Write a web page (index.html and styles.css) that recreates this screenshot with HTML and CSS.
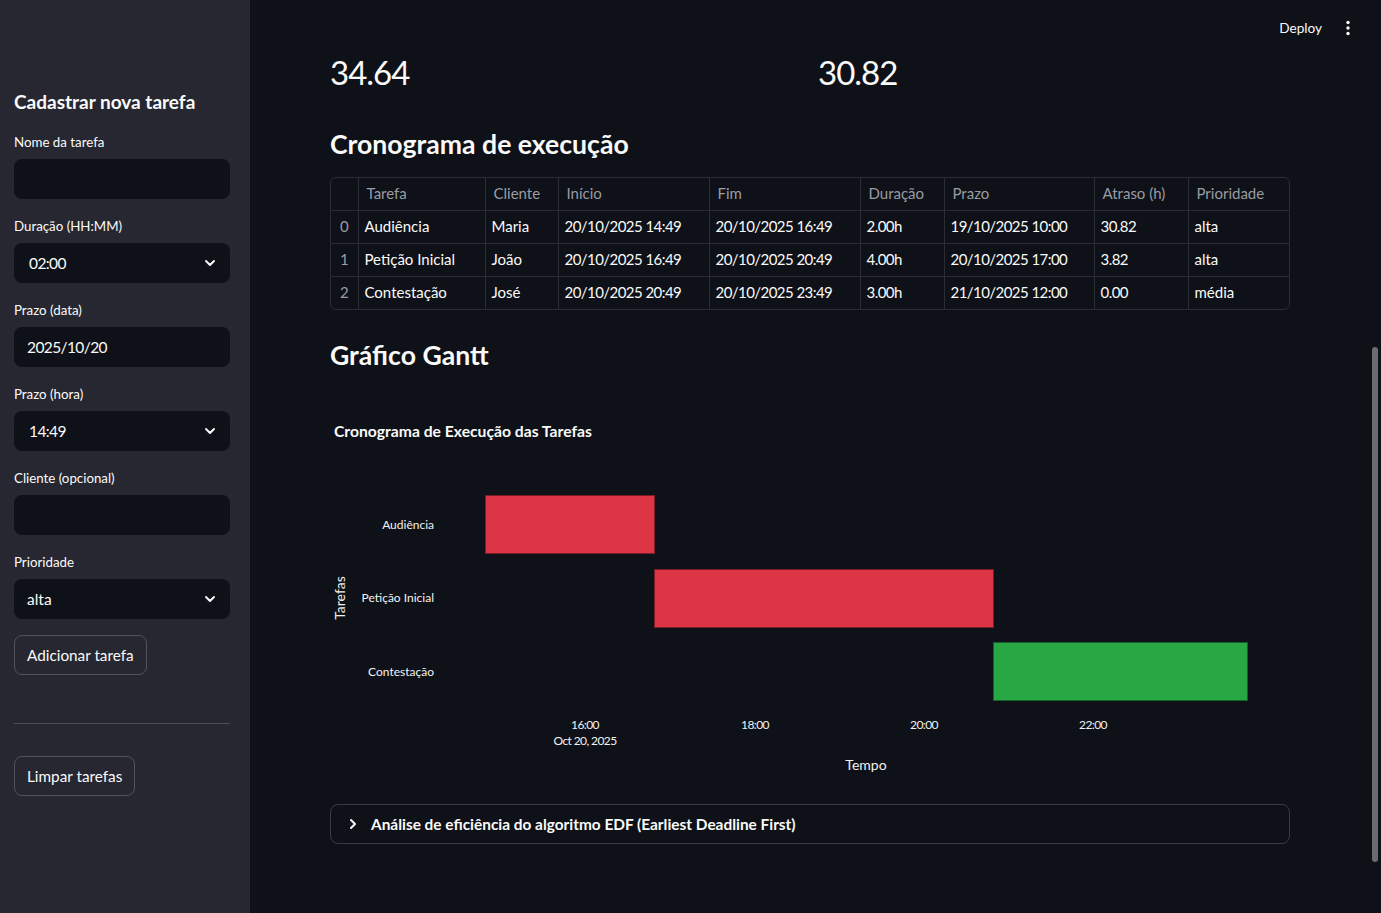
FILE: index.html
```html
<!DOCTYPE html>
<html lang="pt">
<head>
<meta charset="utf-8">
<title>Agendador EDF</title>
<link rel="stylesheet" href="styles.css">
</head>
<body>
<div class="app">
  <aside class="sidebar">
    <h2 class="side-title">Cadastrar nova tarefa</h2>
    <div class="field">
      <label class="field-label">Nome da tarefa</label>
      <div class="input"></div>
    </div>
    <div class="field">
      <label class="field-label">Duração (HH:MM)</label>
      <div class="input select"><span class="val sel num">02:00</span>
        <svg class="chev" width="12" height="8" viewBox="0 0 12 8"><path d="M2 2l4 4 4-4" fill="none" stroke="#fafafa" stroke-width="2" stroke-linecap="round" stroke-linejoin="round"/></svg>
      </div>
    </div>
    <div class="field">
      <label class="field-label">Prazo (data)</label>
      <div class="input"><span class="val num">2025/10/20</span></div>
    </div>
    <div class="field">
      <label class="field-label">Prazo (hora)</label>
      <div class="input select"><span class="val sel num">14:49</span>
        <svg class="chev" width="12" height="8" viewBox="0 0 12 8"><path d="M2 2l4 4 4-4" fill="none" stroke="#fafafa" stroke-width="2" stroke-linecap="round" stroke-linejoin="round"/></svg>
      </div>
    </div>
    <div class="field">
      <label class="field-label">Cliente (opcional)</label>
      <div class="input"></div>
    </div>
    <div class="field">
      <label class="field-label">Prioridade</label>
      <div class="input select"><span class="val">alta</span>
        <svg class="chev" width="12" height="8" viewBox="0 0 12 8"><path d="M2 2l4 4 4-4" fill="none" stroke="#fafafa" stroke-width="2" stroke-linecap="round" stroke-linejoin="round"/></svg>
      </div>
    </div>
    <button class="btn btn-add">Adicionar tarefa</button>
    <hr class="divider">
    <button class="btn btn-clear">Limpar tarefas</button>
  </aside>

  <main class="main">
    <header class="topbar">
      <span class="deploy">Deploy</span>
      <svg class="kebab" width="4" height="16" viewBox="0 0 4 16"><circle cx="2" cy="2.5" r="1.7" fill="#fafafa"/><circle cx="2" cy="8" r="1.7" fill="#fafafa"/><circle cx="2" cy="13.5" r="1.7" fill="#fafafa"/></svg>
    </header>

    <div class="content">
      <div class="metrics">
        <div class="metric">34.64</div>
        <div class="metric">30.82</div>
      </div>

      <h3 class="section-title sec-1">Cronograma de execução</h3>

      <div class="table-wrap">
        <table class="df">
          <colgroup>
            <col style="width:27px"><col style="width:127px"><col style="width:73px"><col style="width:151px"><col style="width:151px"><col style="width:84px"><col style="width:150px"><col style="width:94px"><col style="width:103px">
          </colgroup>
          <thead>
            <tr><th></th><th>Tarefa</th><th>Cliente</th><th>Início</th><th>Fim</th><th>Duração</th><th>Prazo</th><th>Atraso (h)</th><th>Prioridade</th></tr>
          </thead>
          <tbody>
            <tr><td class="idx">0</td><td>Audiência</td><td>Maria</td><td class="num">20/10/2025 14:49</td><td class="num">20/10/2025 16:49</td><td class="num">2.00h</td><td class="num">19/10/2025 10:00</td><td class="num">30.82</td><td>alta</td></tr>
            <tr><td class="idx">1</td><td>Petição Inicial</td><td>João</td><td class="num">20/10/2025 16:49</td><td class="num">20/10/2025 20:49</td><td class="num">4.00h</td><td class="num">20/10/2025 17:00</td><td class="num">3.82</td><td>alta</td></tr>
            <tr><td class="idx">2</td><td>Contestação</td><td>José</td><td class="num">20/10/2025 20:49</td><td class="num">20/10/2025 23:49</td><td class="num">3.00h</td><td class="num">21/10/2025 12:00</td><td class="num">0.00</td><td>média</td></tr>
          </tbody>
        </table>
      </div>

      <h3 class="section-title sec-2">Gráfico Gantt</h3>

      <svg class="gantt" width="960" height="400" viewBox="0 0 960 400">
        <text class="g-title" x="4" y="47">Cronograma de Execução das Tarefas</text>
        <rect x="155.5" y="105.5" width="169" height="58" fill="#dc3545" stroke="#7a1d26" stroke-width="1"/>
        <rect x="324.5" y="179.5" width="339" height="58" fill="#dc3545" stroke="#7a1d26" stroke-width="1"/>
        <rect x="663.5" y="252.5" width="254" height="58" fill="#28a745" stroke="#16602a" stroke-width="1"/>
        <text class="g-lbl" x="104" y="139" text-anchor="end">Audiência</text>
        <text class="g-lbl" x="104" y="212" text-anchor="end">Petição Inicial</text>
        <text class="g-lbl" x="104" y="286" text-anchor="end">Contestação</text>
        <text class="g-lbl g-num" x="255" y="339" text-anchor="middle">16:00</text>
        <text class="g-lbl g-num" x="255" y="355" text-anchor="middle">Oct 20, 2025</text>
        <text class="g-lbl g-num" x="425" y="339" text-anchor="middle">18:00</text>
        <text class="g-lbl g-num" x="594" y="339" text-anchor="middle">20:00</text>
        <text class="g-lbl g-num" x="763" y="339" text-anchor="middle">22:00</text>
        <text class="g-axis" x="536" y="380" text-anchor="middle">Tempo</text>
        <text class="g-axis" x="0" y="0" text-anchor="middle" transform="translate(15 208) rotate(-90)">Tarefas</text>
      </svg>

      <div class="expander">
        <svg class="exp-chev" width="8" height="12" viewBox="0 0 8 12"><path d="M2 2l4 4-4 4" fill="none" stroke="#fafafa" stroke-width="2" stroke-linecap="round" stroke-linejoin="round"/></svg>
        <span class="exp-title">Análise de eficiência do algoritmo EDF (Earliest Deadline First)</span>
      </div>
    </div>
    <div class="scrollthumb"></div>
  </main>
</div>
</body>
</html>
```

FILE: styles.css
```css
* { box-sizing: border-box; }
html, body { margin: 0; padding: 0; }
body {
  background: #0e1117;
  color: #fafafa;
  font-family: "Lato", "Noto Sans", "Liberation Sans", sans-serif;
  width: 1381px;
  height: 913px;
  overflow: hidden;
}
.app {
  display: flex;
  height: 913px;
}
.sidebar {
  width: 250px;
  flex: 0 0 250px;
  background: #262730;
  padding: 87px 20px 0 14px;
  display: flex;
  flex-direction: column;
  align-items: flex-start;
}
.side-title {
  margin: 0 0 15px;
  font-size: 19px;
  line-height: 30px;
  font-weight: 700;
}
.field {
  width: 216px;
  display: flex;
  flex-direction: column;
  margin-bottom: 17px;
}
.field-label {
  font-size: 13.3px;
  line-height: 20px;
  margin-bottom: 7px;
}
.input {
  height: 40px;
  background: #0f1118;
  border-radius: 8px;
  display: flex;
  align-items: center;
  padding: 0 14px 0 13px;
  justify-content: space-between;
}
.val { font-size: 15.5px; }
.val.num { letter-spacing: -0.6px; }
.val.sel { padding-left: 2px; }
.chev { display: block; }
.btn {
  background: #262730;
  color: #fafafa;
  border: 1px solid #51525a;
  border-radius: 8px;
  height: 40px;
  padding: 0 12px;
  font-family: inherit;
  font-size: 15.3px;
}
.btn-add { margin-top: -1px; }
.divider {
  width: 216px;
  border: 0;
  border-top: 1px solid #4a4b53;
  margin: 48px 0 32px;
}
.main {
  flex: 1;
  position: relative;
}
.topbar {
  position: absolute;
  top: 0; left: 0; right: 0;
  height: 56px;
  display: flex;
  align-items: center;
  justify-content: flex-end;
  padding-right: 31px;
  gap: 24px;
}
.deploy { font-size: 13.6px; }
.content {
  width: 960px;
  margin-left: 80px;
  padding-top: 50px;
  display: flex;
  flex-direction: column;
}
.metrics {
  display: flex;
  gap: 16px;
  height: 44px;
}
.metric {
  flex: 1;
  font-size: 33px;
  line-height: 44px;
  letter-spacing: -1px;
}
.section-title {
  margin: 0;
  font-size: 26.6px;
  line-height: 40px;
  font-weight: 700;
}
.sec-1 { margin-top: 30px; margin-bottom: 13px; }
.sec-2 { margin-top: 25px; margin-bottom: 15px; }
.table-wrap {
  border: 1px solid #2b2d35;
  border-radius: 6px;
  overflow: hidden;
}
.df {
  border-collapse: collapse;
  table-layout: fixed;
  width: 958px;
  font-size: 15px;
}
.df th, .df td {
  height: 33px;
  border-right: 1px solid #2b2d35;
  border-bottom: 1px solid #2b2d35;
  padding: 0 6px 1px;
  text-align: left;
  white-space: nowrap;
  overflow: hidden;
}
.df td.num { letter-spacing: -0.55px; }
.df th { font-weight: 400; color: #9a9ca4; padding-left: 8px; height: 32px; }
.df tr > *:last-child { border-right: 0; }
.df tbody tr:last-child td { border-bottom: 0; }
.df td.idx { color: #9a9ca4; text-align: center; padding: 0 0 1px; }
.gantt { display: block; margin-top: 0; }
.g-title { font-size: 15.7px; font-weight: 700; fill: #fafafa; }
.g-lbl { font-size: 12px; fill: #f2f2f2; }
.g-num { letter-spacing: -0.6px; }
.g-axis { font-size: 14px; fill: #f2f2f2; }
.expander {
  margin-top: 14px;
  height: 40px;
  border: 1px solid #3a3c44;
  border-radius: 8px;
  display: flex;
  align-items: center;
  padding-left: 18px;
  gap: 14px;
}
.exp-title { font-size: 15.4px; font-weight: 700; }
.scrollthumb {
  position: absolute;
  left: 1122px;
  top: 347px;
  width: 6px;
  height: 515px;
  background: #6b6c70;
  border-radius: 3px;
}
```
